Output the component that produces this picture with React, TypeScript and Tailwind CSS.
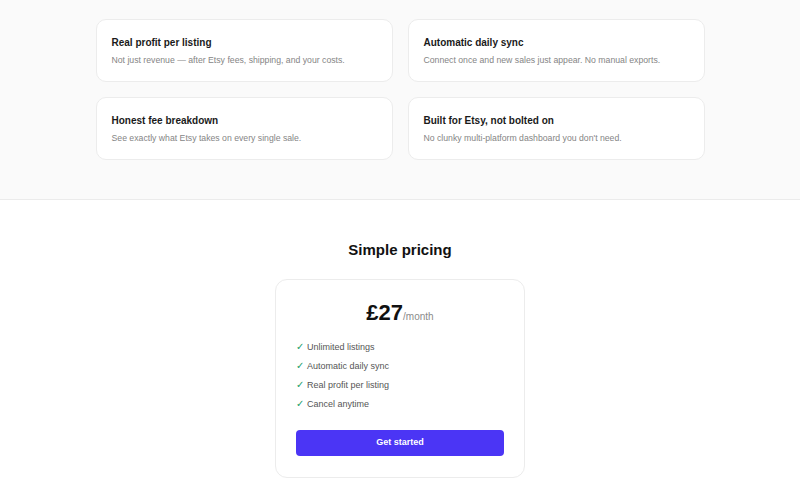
import React from "react";

const features = [
  { t: "Real profit per listing", d: "Not just revenue — after Etsy fees, shipping, and your costs." },
  { t: "Automatic daily sync", d: "Connect once and new sales just appear. No manual exports." },
  { t: "Honest fee breakdown", d: "See exactly what Etsy takes on every single sale." },
  { t: "Built for Etsy, not bolted on", d: "No clunky multi-platform dashboard you don't need." },
];

const items = ["Unlimited listings", "Automatic daily sync", "Real profit per listing", "Cancel anytime"];

export default function App() {
  return (
    <div className="w-[800px] h-[500px] overflow-hidden bg-white" style={{ fontFamily: '"Liberation Sans", Arial, sans-serif' }}>
      <section className="bg-[#fafafa] border-b border-[#ebebeb] pt-[19px] pb-[39px]">
        <div className="mx-auto w-[609px] grid grid-cols-2 gap-x-[15px] gap-y-[15px]">
          {features.map((f) => (
            <div key={f.t} className="bg-white border border-[#ececec] rounded-[10px] px-[15px] pt-[16px] pb-[15px]">
              <div className="text-[10px] leading-[14px] font-bold text-[#1a1a1a]">{f.t}</div>
              <div className="mt-[4px] text-[8.7px] leading-[12px] text-[#858585]">{f.d}</div>
            </div>
          ))}
        </div>
      </section>
      <section className="pt-[40px] flex flex-col items-center">
        <h2 className="text-[15px] leading-[20px] font-bold text-[#111]">Simple pricing</h2>
        <div className="mt-[19px] w-[250px] bg-white border border-[#ececec] rounded-[12px] px-[20px] pt-[19px] pb-[21px]">
          <div className="flex items-baseline justify-center">
            <span className="text-[22px] leading-[28px] font-bold text-[#111]">£27</span>
            <span className="text-[10px] text-[#8a8a8a]">/month</span>
          </div>
          <ul className="mt-[14px] flex flex-col gap-[7px]">
            {items.map((i) => (
              <li key={i} className="flex items-center text-[9px] leading-[12px] text-[#555]">
                <span className="w-[11px] text-[#22a06b] text-[10px]">✓</span>
                {i}
              </li>
            ))}
          </ul>
          <button className="mt-[20px] w-full h-[26px] rounded-[4px] bg-[#4b35f5] text-white text-[9px] font-bold">
            Get started
          </button>
        </div>
      </section>
    </div>
  );
}
